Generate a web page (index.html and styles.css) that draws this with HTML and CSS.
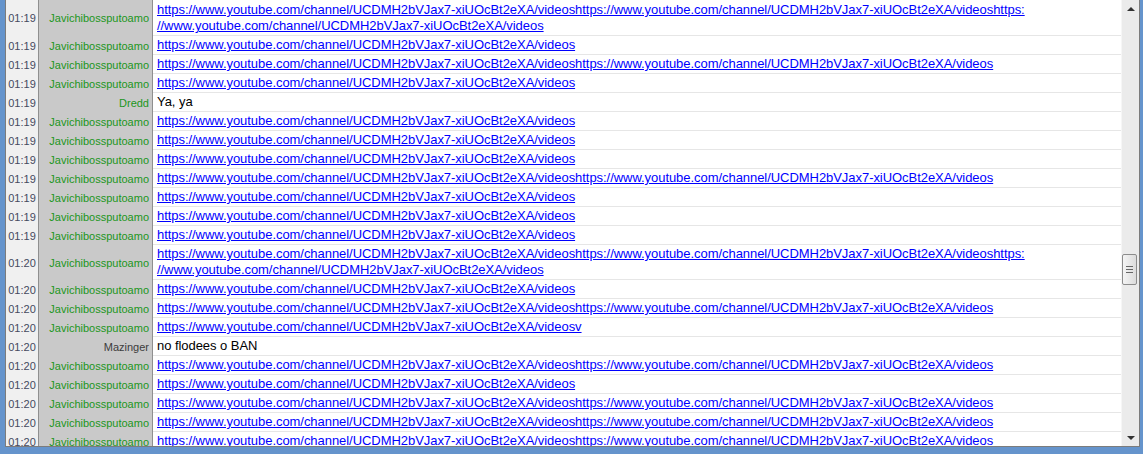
FILE: index.html
```html
<!DOCTYPE html>
<html>
<head>
<meta charset="utf-8">
<link rel="stylesheet" href="styles.css">
</head>
<body>
<div class="frame">
  <div class="log" id="log">
    <div class="row"><div class="time">01:19</div><div class="nick">Javichibossputoamo</div><div class="msg"><a href="#">https://www.youtube.com/channel/UCDMH2bVJax7-xiUOcBt2eXA/videoshttps://www.youtube.com/channel/UCDMH2bVJax7-xiUOcBt2eXA/videoshttps:<br>//www.youtube.com/channel/UCDMH2bVJax7-xiUOcBt2eXA/videos</a></div></div>
    <div class="row"><div class="time">01:19</div><div class="nick">Javichibossputoamo</div><div class="msg"><a href="#">https://www.youtube.com/channel/UCDMH2bVJax7-xiUOcBt2eXA/videos</a></div></div>
    <div class="row"><div class="time">01:19</div><div class="nick">Javichibossputoamo</div><div class="msg"><a href="#">https://www.youtube.com/channel/UCDMH2bVJax7-xiUOcBt2eXA/videoshttps://www.youtube.com/channel/UCDMH2bVJax7-xiUOcBt2eXA/videos</a></div></div>
    <div class="row"><div class="time">01:19</div><div class="nick">Javichibossputoamo</div><div class="msg"><a href="#">https://www.youtube.com/channel/UCDMH2bVJax7-xiUOcBt2eXA/videos</a></div></div>
    <div class="row"><div class="time">01:19</div><div class="nick">Dredd</div><div class="msg">Ya, ya</div></div>
    <div class="row"><div class="time">01:19</div><div class="nick">Javichibossputoamo</div><div class="msg"><a href="#">https://www.youtube.com/channel/UCDMH2bVJax7-xiUOcBt2eXA/videos</a></div></div>
    <div class="row"><div class="time">01:19</div><div class="nick">Javichibossputoamo</div><div class="msg"><a href="#">https://www.youtube.com/channel/UCDMH2bVJax7-xiUOcBt2eXA/videos</a></div></div>
    <div class="row"><div class="time">01:19</div><div class="nick">Javichibossputoamo</div><div class="msg"><a href="#">https://www.youtube.com/channel/UCDMH2bVJax7-xiUOcBt2eXA/videos</a></div></div>
    <div class="row"><div class="time">01:19</div><div class="nick">Javichibossputoamo</div><div class="msg"><a href="#">https://www.youtube.com/channel/UCDMH2bVJax7-xiUOcBt2eXA/videoshttps://www.youtube.com/channel/UCDMH2bVJax7-xiUOcBt2eXA/videos</a></div></div>
    <div class="row"><div class="time">01:19</div><div class="nick">Javichibossputoamo</div><div class="msg"><a href="#">https://www.youtube.com/channel/UCDMH2bVJax7-xiUOcBt2eXA/videos</a></div></div>
    <div class="row"><div class="time">01:19</div><div class="nick">Javichibossputoamo</div><div class="msg"><a href="#">https://www.youtube.com/channel/UCDMH2bVJax7-xiUOcBt2eXA/videos</a></div></div>
    <div class="row"><div class="time">01:19</div><div class="nick">Javichibossputoamo</div><div class="msg"><a href="#">https://www.youtube.com/channel/UCDMH2bVJax7-xiUOcBt2eXA/videos</a></div></div>
    <div class="row"><div class="time">01:20</div><div class="nick">Javichibossputoamo</div><div class="msg"><a href="#">https://www.youtube.com/channel/UCDMH2bVJax7-xiUOcBt2eXA/videoshttps://www.youtube.com/channel/UCDMH2bVJax7-xiUOcBt2eXA/videoshttps:<br>//www.youtube.com/channel/UCDMH2bVJax7-xiUOcBt2eXA/videos</a></div></div>
    <div class="row"><div class="time">01:20</div><div class="nick">Javichibossputoamo</div><div class="msg"><a href="#">https://www.youtube.com/channel/UCDMH2bVJax7-xiUOcBt2eXA/videos</a></div></div>
    <div class="row"><div class="time">01:20</div><div class="nick">Javichibossputoamo</div><div class="msg"><a href="#">https://www.youtube.com/channel/UCDMH2bVJax7-xiUOcBt2eXA/videoshttps://www.youtube.com/channel/UCDMH2bVJax7-xiUOcBt2eXA/videos</a></div></div>
    <div class="row"><div class="time">01:20</div><div class="nick">Javichibossputoamo</div><div class="msg"><a href="#">https://www.youtube.com/channel/UCDMH2bVJax7-xiUOcBt2eXA/videosv</a></div></div>
    <div class="row"><div class="time">01:20</div><div class="nick other">Mazinger</div><div class="msg">no flodees o BAN</div></div>
    <div class="row"><div class="time">01:20</div><div class="nick">Javichibossputoamo</div><div class="msg"><a href="#">https://www.youtube.com/channel/UCDMH2bVJax7-xiUOcBt2eXA/videoshttps://www.youtube.com/channel/UCDMH2bVJax7-xiUOcBt2eXA/videos</a></div></div>
    <div class="row"><div class="time">01:20</div><div class="nick">Javichibossputoamo</div><div class="msg"><a href="#">https://www.youtube.com/channel/UCDMH2bVJax7-xiUOcBt2eXA/videos</a></div></div>
    <div class="row"><div class="time">01:20</div><div class="nick">Javichibossputoamo</div><div class="msg"><a href="#">https://www.youtube.com/channel/UCDMH2bVJax7-xiUOcBt2eXA/videoshttps://www.youtube.com/channel/UCDMH2bVJax7-xiUOcBt2eXA/videos</a></div></div>
    <div class="row"><div class="time">01:20</div><div class="nick">Javichibossputoamo</div><div class="msg"><a href="#">https://www.youtube.com/channel/UCDMH2bVJax7-xiUOcBt2eXA/videoshttps://www.youtube.com/channel/UCDMH2bVJax7-xiUOcBt2eXA/videos</a></div></div>
    <div class="row"><div class="time">01:20</div><div class="nick">Javichibossputoamo</div><div class="msg"><a href="#">https://www.youtube.com/channel/UCDMH2bVJax7-xiUOcBt2eXA/videoshttps://www.youtube.com/channel/UCDMH2bVJax7-xiUOcBt2eXA/videos</a></div></div>
  </div>
  <div class="scrollbar">
    <div class="arrow up"></div>
    <div class="track">
      <div class="thumb"><span></span><span></span><span></span></div>
    </div>
    <div class="arrow down"></div>
  </div>
</div>
</body>
</html>
```
FILE: styles.css
```css
html, body {
  margin: 0;
  padding: 0;
  background: #6594cc;
  height: 454px;
  overflow: hidden;
}
.frame {
  margin-left: 5px;
  width: 1133px;
  height: 446px;
  display: flex;
  border-left: 1px solid #7c7c7c;
  border-right: 1px solid #7c7c7c;
  border-bottom: 1px solid #7c7c7c;
  background: #ffffff;
  overflow: hidden;
}
.log {
  flex: 1;
  display: flex;
  flex-direction: column;
  overflow: hidden;
}
.row {
  display: flex;
  flex-shrink: 0;
}
.time {
  width: 32px;
  flex-shrink: 0;
  background: #f0f0f0;
  border-right: 1px solid #8f8f8f;
  color: #454a5e;
  font: 11px "Liberation Sans", Arial, sans-serif;
  display: flex;
  align-items: center;
  justify-content: center;
}
.nick {
  width: 110px;
  flex-shrink: 0;
  background: #c9c9c9;
  border-right: 1px solid #8f8f8f;
  color: #1c961c;
  font: 11px "Liberation Sans", Arial, sans-serif;
  padding-right: 3px;
  display: flex;
  align-items: center;
  justify-content: flex-end;
}
.nick.other {
  color: #3c3c3c;
}
.msg {
  flex: 1;
  padding: 1px 4px 1px 4px;
  border-bottom: 1px solid #e6e6e6;
  font: 13px/16px "Liberation Sans", Arial, sans-serif;
  letter-spacing: -0.05px;
  color: #000000;
  white-space: nowrap;
}
.row:first-child .msg {
  padding-top: 2px;
}
.msg a {
  color: #0000ff;
  text-decoration: underline;
}
.scrollbar {
  width: 17px;
  flex-shrink: 0;
  background: #ebebeb;
  border-left: 1px solid #f6f6f6;
  display: flex;
  flex-direction: column;
}
.arrow {
  height: 17px;
  flex-shrink: 0;
  display: flex;
  align-items: center;
  justify-content: center;
}
.arrow::before {
  content: "";
  width: 0;
  height: 0;
  border-left: 4px solid transparent;
  border-right: 4px solid transparent;
}
.arrow.up::before {
  border-bottom: 4px solid #333;
}
.arrow.down::before {
  border-top: 4px solid #333;
}
.track {
  flex: 1;
  position: relative;
}
.thumb {
  position: absolute;
  left: 0;
  top: 237px;
  width: 13px;
  height: 29px;
  border: 1px solid #8c8c8c;
  border-radius: 2px;
  background: linear-gradient(to right, #f4f4f4, #dcdcdc);
  display: flex;
  flex-direction: column;
  align-items: center;
  justify-content: center;
  gap: 2px;
}
.thumb span {
  width: 7px;
  height: 1px;
  background: #666;
}
```
